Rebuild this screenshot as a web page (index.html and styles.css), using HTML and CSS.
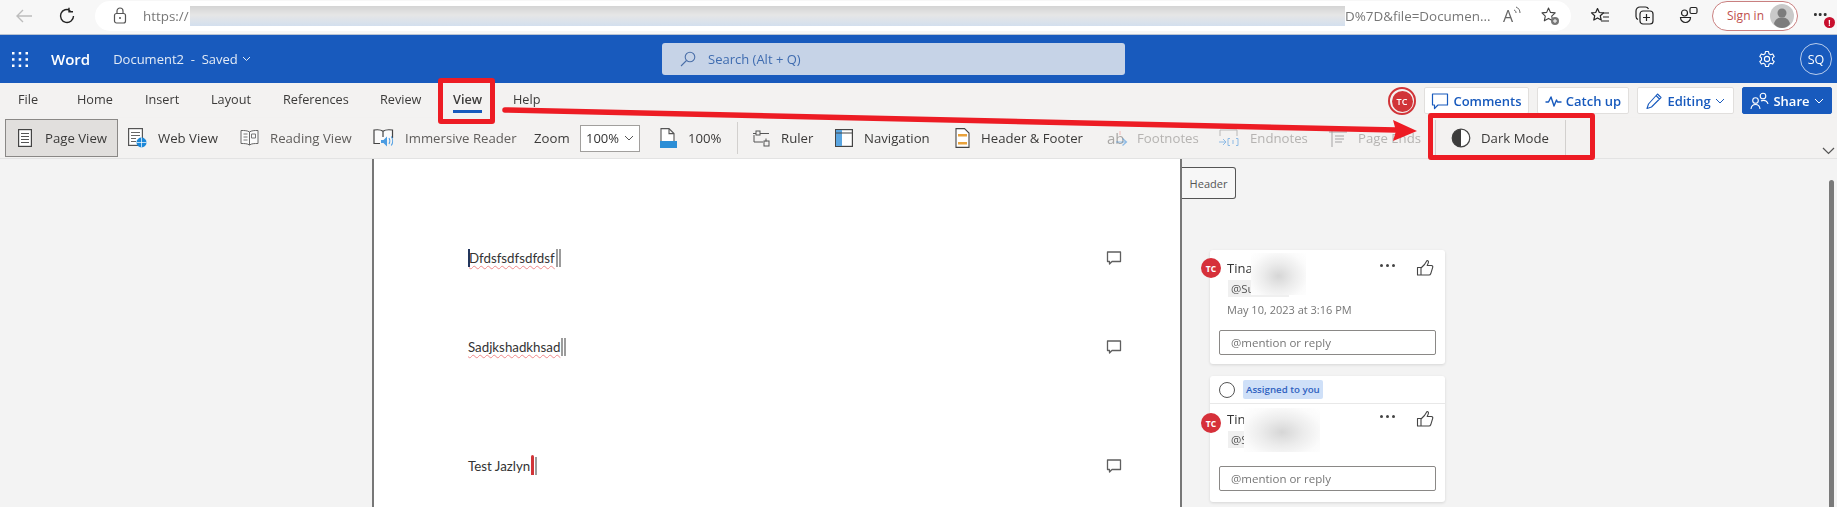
FILE: index.html
```html
<!DOCTYPE html>
<html lang="en">
<head>
<meta charset="utf-8">
<title>Document2 - Word</title>
<link rel="stylesheet" href="styles.css">
</head>
<body>
<svg class="defs" width="0" height="0" aria-hidden="true">
  <symbol id="like" viewBox="0 0 18 18"><path d="M1.500 8.500h3.500v7.500H1.500zM5 9l3.500-3.500L11 1.500c1.300.2 1.800 1.200 1.300 2.400L11.200 6.500h4.300c1 0 1.500 1 1.200 1.800l-2 6.500c-.3.800-.9 1.200-1.700 1.200H5" fill="none" stroke="#444" stroke-width="1.100" stroke-linejoin="round"/></symbol>
  <symbol id="bubble" viewBox="0 0 16 16"><path d="M1.500 2h13v9.500H6l-2.500 2.500v-2.500h-2z" fill="none" stroke="#5f5f5f" stroke-width="1.300" stroke-linejoin="round"/></symbol>
</svg>
<div class="app">
  <header class="browser">
    <svg class="b-back" width="18" height="16" viewBox="0 0 18 16"><path d="M17 8H2M8 2 2 8l6 6" fill="none" stroke="#bdbdbd" stroke-width="1.400"/></svg>
    <svg class="b-reload" width="18" height="18" viewBox="0 0 18 18"><path d="M15.500 9A6.500 6.500 0 1 1 12.500 3.500M11 .8v4h4" fill="none" stroke="#222" stroke-width="1.400"/></svg>
    <div class="pill">
      <svg class="lock" width="14" height="17" viewBox="0 0 14 17"><path d="M4 7V4a3 3 0 0 1 6 0v3" fill="none" stroke="#555" stroke-width="1.200"/><rect x="1.500" y="6.500" width="11" height="9.500" rx="2" fill="none" stroke="#555" stroke-width="1.200"/><circle cx="7" cy="11" r="1" fill="#555"/></svg>
      <span class="url-a">https://</span>
      <span class="redact"></span>
      <span class="url-b">D%7D&amp;file=Documen...</span>
      <div class="read"><span class="read-a">A</span><svg width="8" height="10" viewBox="0 0 8 10"><path d="M1 4c1.500.5 2 1.500 2 3M3 1c2.500 1 4 3 4 6" fill="none" stroke="#666" stroke-width="1"/></svg></div>
      <svg class="fav" width="20" height="20" viewBox="0 0 20 20"><path d="M8.500 2l2 4.400 4.700.5-3.500 3.200 1 4.700-4.200-2.400-4.200 2.400 1-4.700L2 6.900l4.700-.5z" fill="none" stroke="#444" stroke-width="1.100" stroke-linejoin="round"/><circle cx="15" cy="15" r="4" fill="#777"/><path d="M15 13v4M13 15h4" stroke="#fff" stroke-width="1"/></svg>
    </div>
    <svg class="t-favs" width="20" height="18" viewBox="0 0 20 18"><path d="M7.500 1.500l1.800 4 4.200.4-3.200 2.900.9 4.200-3.700-2.100-3.700 2.100.9-4.200L1.500 5.900l4.200-.4z" fill="none" stroke="#222" stroke-width="1.200" stroke-linejoin="round"/><path d="M13 6h6M13 10h6M11 14h8" stroke="#222" stroke-width="1.200"/></svg>
    <svg class="t-coll" width="19" height="19" viewBox="0 0 19 19"><rect x="5" y="5" width="13" height="13" rx="3" fill="none" stroke="#222" stroke-width="1.200"/><path d="M3 13.500C1.800 13 1 12 1 10.500V5a4 4 0 0 1 4-4h5.500c1.500 0 2.500.8 3 2M11.500 8v7M8 11.500h7" fill="none" stroke="#222" stroke-width="1.200"/></svg>
    <svg class="t-ext" width="20" height="19" viewBox="0 0 20 19"><circle cx="5.500" cy="7" r="3" fill="none" stroke="#222" stroke-width="1.200"/><rect x="11" y="1.500" width="7" height="6" rx="1.500" fill="none" stroke="#222" stroke-width="1.200"/><path d="M1.500 11.500h10a5 5 0 0 1-10 0z" fill="none" stroke="#222" stroke-width="1.200"/></svg>
    <div class="signin">
      <span class="signin-text">Sign in</span>
      <svg class="guest" width="24" height="24" viewBox="0 0 24 24"><circle cx="12" cy="12" r="12" fill="#c9c9c9"/><circle cx="12" cy="9" r="4.500" fill="#7d7d7d"/><path d="M4 20c1-5 4-6.500 8-6.500S19 15 20 20c-2 2.500-5 4-8 4s-6-1.500-8-4z" fill="#7d7d7d"/></svg>
    </div>
    <div class="more"><span class="more-dots">···</span><span class="more-badge">!</span></div>
  </header>

  <div class="appbar">
    <div class="brand">
      <svg class="waffle" width="16" height="15" viewBox="0 0 16 15"><g fill="#fff"><rect width="2.500" height="2.500"/><rect x="6.700" width="2.500" height="2.500"/><rect x="13.500" width="2.500" height="2.500"/><rect y="6.200" width="2.500" height="2.500"/><rect x="6.700" y="6.200" width="2.500" height="2.500"/><rect x="13.500" y="6.200" width="2.500" height="2.500"/><rect y="12.500" width="2.500" height="2.500"/><rect x="6.700" y="12.500" width="2.500" height="2.500"/><rect x="13.500" y="12.500" width="2.500" height="2.500"/></g></svg>
      <span class="word">Word</span>
      <span class="docname">Document2 &nbsp;-&nbsp; Saved</span>
      <svg width="9" height="6" viewBox="0 0 9 6"><path d="M1 1l3.500 3.500L8 1" fill="none" stroke="#e3ebf6" stroke-width="1"/></svg>
    </div>
    <div class="search">
      <svg width="16" height="16" viewBox="0 0 16 16"><circle cx="10" cy="6" r="4.800" fill="none" stroke="#4a6fa8" stroke-width="1.100"/><path d="M6.500 9.500 1 15" stroke="#4a6fa8" stroke-width="1.100"/></svg>
      <span>Search (Alt + Q)</span>
    </div>
    <div class="user">
      <svg width="18" height="18" viewBox="0 0 18 18"><circle cx="9" cy="9" r="2.600" fill="none" stroke="#fff" stroke-width="1.100"/><path d="M7.500 1.500h3l.4 2.200 1.700 1 2.100-.8 1.500 2.600-1.700 1.400v2.200l1.700 1.400-1.500 2.600-2.100-.8-1.700 1-.4 2.200h-3l-.4-2.200-1.700-1-2.100.8-1.500-2.600 1.700-1.400V7.900L1.800 6.500l1.500-2.600 2.100.8 1.700-1z" fill="none" stroke="#fff" stroke-width="1.100" stroke-linejoin="round"/></svg>
      <span class="sq">SQ</span>
    </div>
  </div>

  <div class="tabs-row">
    <nav class="tabs">
      <span class="tab">File</span>
      <span class="tab">Home</span>
      <span class="tab">Insert</span>
      <span class="tab">Layout</span>
      <span class="tab">References</span>
      <span class="tab">Review</span>
      <span class="tab tab-on">View</span>
      <span class="tab">Help</span>
    </nav>
    <div class="actions">
      <span class="presence"><span class="presence-in">TC</span></span>
      <button class="act act-comments"><svg width="18" height="18" viewBox="0 0 18 18"><path d="M1.500 2h15v11H7l-3.500 3.500V13h-2z" fill="none" stroke="#185abd" stroke-width="1.200" stroke-linejoin="round"/></svg>Comments</button>
      <button class="act act-catch"><svg width="17" height="12" viewBox="0 0 17 12"><path d="M.5 7h3l2.500-5 3 9 2.500-6 1 2h4" fill="none" stroke="#185abd" stroke-width="1.400" stroke-linejoin="round"/></svg>Catch up</button>
      <button class="act act-edit"><svg width="17" height="18" viewBox="0 0 17 18"><path d="M11.500 2 15 5.500 5.500 15 1 16.500 2.500 12zM10 3.500l3.500 3.500" fill="none" stroke="#185abd" stroke-width="1.100" stroke-linejoin="round"/></svg>Editing<svg width="10" height="6" viewBox="0 0 10 6"><path d="M1 1l4 4 4-4" fill="none" stroke="#185abd" stroke-width="1"/></svg></button>
      <button class="act act-share"><svg width="19" height="18" viewBox="0 0 19 18"><circle cx="5.500" cy="8.500" r="2.800" fill="none" stroke="#fff" stroke-width="1.100"/><circle cx="13" cy="4" r="2.800" fill="none" stroke="#fff" stroke-width="1.100"/><path d="M1 17c.3-3 2-4.500 4.500-4.500S9.700 14 10 17M11 9c1-.8 3.800-.8 5 0 1 .7 1.800 2 2 3" fill="none" stroke="#fff" stroke-width="1.100"/></svg>Share<svg width="10" height="6" viewBox="0 0 10 6"><path d="M1 1l4 4 4-4" fill="none" stroke="#fff" stroke-width="1"/></svg></button>
    </div>
  </div>

  <div class="ribbon">
    <div class="rb rb-page">
      <svg width="14" height="18" viewBox="0 0 14 18"><rect x=".6" y=".6" width="12.800" height="16.800" fill="#fff" stroke="#444" stroke-width="1.200"/><path d="M3 4.500h8M3 7.500h8M3 10.500h8M3 13.500h8" stroke="#555"/></svg>
      <span>Page View</span>
    </div>
    <div class="rb">
      <svg width="19" height="20" viewBox="0 0 19 20"><rect x=".6" y=".6" width="13.800" height="16.800" fill="#fff" stroke="#555" stroke-width="1.200"/><path d="M3 4.500h9M3 7.500h9M3 10.500h5M3 13.500h5" stroke="#666"/><circle cx="13.500" cy="14.500" r="5" fill="#1b87d8"/><path d="M8.500 14.500h10M13.500 9.500v10" stroke="#fff" stroke-width=".7"/></svg>
      <span>Web View</span>
    </div>
    <div class="rb rb-soft">
      <svg width="19" height="18" viewBox="0 0 19 18"><path d="M9.500 3c-2-1.500-5-1.500-8.500-1.500v13c3.500 0 6.500 0 8.500 1.500 2-1.500 5-1.500 8.500-1.500v-13c-3.500 0-6.500 0-8.500 1.500zm0 0v13" fill="#fbfbfb" stroke="#666"/><path d="M3.500 5h4M3.500 8h4M3.500 11h4M11.500 5h4v4h-4z" fill="none" stroke="#777"/></svg>
      <span>Reading View</span>
    </div>
    <div class="rb rb-soft">
      <svg width="21" height="20" viewBox="0 0 21 20"><path d="M7 15.500H1V2c3.500-.5 7-.3 9 1.200C12 1.700 15.500 1.500 19.500 2v8M10 3.200V9" fill="#fbfbfb" stroke="#444" stroke-width="1.200"/><path d="M8 12h2.500l3.500-3.500v10L10.500 15H8z" fill="#4b9ce2"/><path d="M16 10c1 1.500 1 4.500 0 6M18.300 8.500c1.700 2.500 1.700 6.500 0 9" fill="none" stroke="#4b9ce2" stroke-width="1.100"/></svg>
      <span>Immersive Reader</span>
    </div>
    <span class="zoom-label">Zoom</span>
    <div class="zoom-select"><span>100%</span><svg width="10" height="6" viewBox="0 0 10 6"><path d="M1 1l4 4 4-4" fill="none" stroke="#555" stroke-width="1"/></svg></div>
    <div class="rb">
      <svg width="17" height="20" viewBox="0 0 17 20"><path d="M1 13V.6h8l5 5V13M9 .6v5h5" fill="#fff" stroke="#555" stroke-width="1.100"/><rect x="0" y="13" width="17" height="7" fill="#2c8ed6"/></svg>
      <span>100%</span>
    </div>
    <span class="rb-sep"></span>
    <div class="rb">
      <svg width="18" height="18" viewBox="0 0 18 18"><path d="M1 4.500h3M8 4.500h9M11 13h-9V6M14 12.500v-3" fill="none" stroke="#555"/><rect x="4" y="2" width="4" height="4" fill="none" stroke="#555"/><rect x="12" y="12" width="5" height="5" fill="none" stroke="#555"/></svg>
      <span>Ruler</span>
    </div>
    <div class="rb">
      <svg width="18" height="18" viewBox="0 0 18 18"><rect x=".6" y=".6" width="16.800" height="16.800" fill="#fff" stroke="#444" stroke-width="1.200"/><rect x="1" y="1" width="6" height="16" fill="#5aa5e0"/><path d="M1 4h16" stroke="#444"/></svg>
      <span>Navigation</span>
    </div>
    <div class="rb">
      <svg width="15" height="20" viewBox="0 0 15 20"><path d="M1 .6h8.500L14 5v14.400H1z" fill="#fff" stroke="#444" stroke-width="1.100"/><rect x="3" y="6" width="9" height="2.500" fill="#e9a23b"/><rect x="3" y="14" width="9" height="2.500" fill="#e9a23b"/></svg>
      <span>Header &amp; Footer</span>
    </div>
    <div class="rb rb-off">
      <span class="ab">ab<svg class="ab-mark" width="12" height="16" viewBox="0 0 12 16"><path d="M4 0v4" stroke="#e88" /><path d="M0 11h10M6.500 7.500l4 3.500-4 3.500" fill="none" stroke="#3d8fdc" stroke-width="1.200"/></svg></span><span>Footnotes</span>
    </div>
    <div class="rb rb-off">
      <svg width="20" height="19" viewBox="0 0 20 19"><path d="M1 7V1h17v6" fill="none" stroke="#888"/><path d="M0 13h7M4 10l3 3-3 3" fill="none" stroke="#3d8fdc"/><path d="M11 9.500H9v7h2M17 9.500h2v7h-2M14 11v4" fill="none" stroke="#3d8fdc"/></svg>
      <span>Endnotes</span>
    </div>
    <div class="rb rb-off">
      <svg width="18" height="18" viewBox="0 0 18 18"><path d="M0 3h18M3 0v18M6 7h9M6 10h9M6 13h7" fill="none" stroke="#666"/></svg>
      <span>Page Ends</span>
    </div>
    <span class="rb-sep rb-sep-dark"></span>
    <div class="rb rb-dark">
      <svg width="20" height="20" viewBox="0 0 20 20"><circle cx="10" cy="10" r="8.800" fill="#fff" stroke="#444" stroke-width="1.200"/><path d="M10 1.200a8.800 8.800 0 0 0 0 17.600z" fill="#3c3c3c"/></svg>
      <span>Dark Mode</span>
    </div>
    <span class="rb-sep rb-sep-dark"></span>
    <svg class="rb-more" width="13" height="8" viewBox="0 0 13 8"><path d="M1 1l5.500 5.500L12 1" fill="none" stroke="#555" stroke-width="1.200"/></svg>
  </div>

  <main class="workspace">
    <div class="gutter"></div>
    <section class="page">
      <div class="line line-1">
        <span class="doc-text"><i class="caret caret-blue"></i><u class="squiggle">Dfdsfsdfsdfdsf</u><i class="caret"></i><i class="caret"></i></span>
        <svg class="note" width="16" height="16"><use href="#bubble"/></svg>
      </div>
      <div class="line line-2">
        <span class="doc-text"><u class="squiggle">Sadjkshadkhsad</u><i class="caret"></i><i class="caret"></i></span>
        <svg class="note" width="16" height="16"><use href="#bubble"/></svg>
      </div>
      <div class="line line-3">
        <span class="doc-text">Test Jazlyn<i class="caret caret-red"></i><i class="caret"></i></span>
        <svg class="note" width="16" height="16"><use href="#bubble"/></svg>
      </div>
    </section>
    <aside class="pane">
      <div class="header-tag">Header</div>
      <article class="card card-1">
        <span class="avatar">TC</span>
        <div class="card-head"><span class="name">Tina</span><span class="dots"><i></i><i></i><i></i></span><svg width="18" height="18"><use href="#like"/></svg></div>
        <span class="mention">@Su</span>
        <p class="date">May 10, 2023 at 3:16 PM</p>
        <div class="reply">@mention or reply</div>
        <span class="smudge smudge-1"></span>
      </article>
      <article class="card card-2">
        <div class="assign"><span class="radio"></span><span class="assigned">Assigned to you</span></div>
        <div class="card-body">
          <span class="avatar">TC</span>
          <div class="card-head"><span class="name">Tin</span><span class="dots"><i></i><i></i><i></i></span><svg width="18" height="18"><use href="#like"/></svg></div>
          <span class="mention">@S</span>
          <div class="reply">@mention or reply</div>
          <span class="smudge smudge-2"></span>
        </div>
      </article>
      <span class="scrollbar"></span>
    </aside>
  </main>

  <span class="callout callout-view"></span>
  <span class="callout callout-dark"></span>
  <svg class="arrow" width="1837" height="507" viewBox="0 0 1837 507"><path d="M505 110 1396 130" stroke="#ed1c24" stroke-width="5.500" stroke-linecap="round"/><path d="M1393 120l24 11-24 10 3-10z" fill="#ed1c24"/></svg>
</div>
</body>
</html>
```
FILE: styles.css
```css
* { box-sizing: border-box; }
html, body { margin: 0; padding: 0; }
body { width: 1837px; height: 507px; overflow: hidden; font-family: "Open Sans", "Liberation Sans", sans-serif; font-size: 13px; color: #333; background: #f3f3f3; }
.defs { position: absolute; }
svg { display: block; flex: none; }
.app { position: relative; width: 1837px; height: 507px; overflow: hidden; filter: blur(.6px); }

/* browser chrome */
.browser { display: flex; align-items: center; height: 35px; background: #f7f7f7; border-bottom: 1px solid #b9c3d2; padding-bottom: 3px; }
.b-back { margin-left: 15px; }
.b-reload { margin-left: 25px; }
.pill { display: flex; align-items: center; width: 1476px; height: 30px; margin-left: 19px; padding-left: 18px; background: #fff; border-radius: 15px; }
.url-a { flex: none; width: 47px; margin-left: 16px; font-size: 13.4px; color: #777; white-space: nowrap; }
.redact { flex: none; width: 1155px; height: 20px; background: linear-gradient(#d4d4d4, #e6e6e6 45%, #d3dfee); }
.url-b { flex: none; width: 158px; font-size: 13.4px; color: #777; white-space: nowrap; }
.read { display: flex; align-items: flex-start; width: 20px; }
.read-a { font-size: 16px; line-height: 20px; color: #666; }
.fav { margin-left: 17px; }
.t-favs { margin-left: 19px; }
.t-coll { margin-left: 25px; }
.t-ext { margin-left: 25px; }
.signin { display: flex; align-items: center; justify-content: space-between; width: 86px; height: 30px; margin-left: 13px; padding: 0 3px 0 14px; border: 1px solid #c98080; border-radius: 15px; background: #fff; }
.signin-text { font-size: 12px; color: #c0504d; }
.more { position: relative; margin-left: 15px; }
.more-dots { font-size: 17px; font-weight: 700; line-height: 18px; color: #333; }
.more-badge { position: absolute; left: 11px; top: 11px; display: flex; align-items: center; justify-content: center; width: 11px; height: 11px; border-radius: 50%; background: #c8102e; color: #fff; font-size: 8px; font-weight: 700; line-height: 11px; }

/* word title bar */
.appbar { display: grid; grid-template-columns: 662px 463px 1fr; align-items: center; height: 48px; background: #185abd; }
.brand { display: flex; align-items: center; padding-left: 12px; }
.word { margin-left: 23px; font-size: 15px; font-weight: 600; color: #fff; }
.docname { margin-left: 23px; font-size: 13px; color: #e3ebf6; white-space: nowrap; }
.brand > svg:last-child { margin-left: 4px; }
.search { display: flex; align-items: center; gap: 12px; height: 32px; padding-left: 18px; background: #c6d3e7; border-radius: 3px; color: #3f6cb0; font-size: 13px; }
.user { display: flex; align-items: center; justify-content: flex-end; padding-right: 5px; gap: 24px; }
.sq { display: flex; align-items: center; justify-content: center; width: 32px; height: 32px; border: 1px solid #b9cdec; border-radius: 50%; color: #fff; font-size: 12.500px; }

/* tabs */
.tabs-row { display: flex; justify-content: space-between; height: 35px; background: #f3f2f1; }
.tabs { display: grid; grid-template-columns: 59px 68px 66px 72px 97px 73px 60px 40px; align-items: start; padding: 7px 0 0 18px; }
.tab { justify-self: start; line-height: 18px; font-size: 12.700px; color: #3b3a39; padding-bottom: 2px; border-bottom: 2px solid transparent; }
.tab-on { font-weight: 600; border-bottom: 3px solid #185abd; }
.actions { display: flex; align-items: flex-start; gap: 8px; padding: 4px 5px 0 0; }
.presence { display: flex; align-items: center; justify-content: center; width: 28px; height: 28px; border-radius: 50%; border: 2px solid #d13438; background: #f3f2f1; }
.presence-in { display: flex; align-items: center; justify-content: center; width: 21px; height: 21px; border-radius: 50%; background: #d13438; color: #fff; font-size: 9px; font-weight: 600; }
.act { display: flex; align-items: center; height: 27px; padding: 0; gap: 4px; justify-content: center; border: 1px solid #e1dfdd; border-radius: 2px; background: #fff; color: #185abd; font: 600 13px "Open Sans", sans-serif; white-space: nowrap; }
.act-comments { width: 105px; }
.act-catch { width: 92px; }
.act-edit { width: 97px; }
.act-share { width: 90px; background: #185abd; border-color: #185abd; color: #fff; }

/* ribbon */
.ribbon { display: grid; grid-template-columns: 123px 112px 133px 161px 46px 80px 77px 15px 83px 120px 152px 112px 110px 106px 16px 114px 16px 1fr; align-items: center; height: 41px; padding-left: 5px; background: #f3f2f1; border-bottom: 1px solid #e3e3e3; box-shadow: 0 1px 2px rgba(0,0,0,.08); }
.rb { display: flex; align-items: center; gap: 11px; font-size: 13.200px; color: #3b3a39; white-space: nowrap; }
.rb-soft { color: #605e5c; }
.rb-off { color: #b5b3b1; }
.rb-off svg { opacity: .55; }
.rb-page { width: 113px; height: 38px; padding-left: 12px; gap: 13px; background: #e1dfdd; border: 1px solid #8a8886; }
.zoom-label { font-size: 13.200px; color: #3b3a39; }
.zoom-select { display: flex; align-items: center; justify-content: space-between; width: 60px; height: 27px; padding: 0 5px; background: #fff; border: 1px solid #a19f9d; font-size: 13px; }
.rb-sep { width: 1px; height: 32px; background: #d2d0ce; }
.rb-sep-dark { height: 36px; }
.rb-dark { gap: 10px; }
.ab { position: relative; width: 19px; font-size: 15px; color: #a9a7a5; }
.ab-mark { position: absolute; left: 9px; top: 3px; }
.rb-more { justify-self: end; align-self: end; margin: 0 2px 3px 0; }

/* document */
.workspace { display: grid; grid-template-columns: 372px 810px 1fr; height: 348px; background: #f3f3f3; }
.page { padding: 89px 58px 0 94px; background: #fff; border: solid #777; border-width: 0 2px; }
.line { display: flex; align-items: center; justify-content: space-between; height: 20px; }
.line-2 { margin-top: 69px; }
.line-3 { margin-top: 99px; }
.doc-text { display: flex; align-items: center; font-family: Lato, "Open Sans", sans-serif; font-size: 13.300px; line-height: 20px; color: #333; }
.squiggle { text-decoration: underline wavy #f08a8a 1px; text-underline-offset: 2px; }
.caret { display: block; width: 2px; height: 18px; margin-left: 1px; background: #9c9c9c; font-style: normal; }
.caret-blue { margin: 0 -1px 0 0; background: #23365e; }
.caret-red { height: 20px; width: 3px; margin-top: -2px; background: #d13438; border-radius: 2px 2px 0 0; }

/* comments pane */
.pane { position: relative; padding-top: 8px; }
.header-tag { display: flex; align-items: center; justify-content: center; width: 54px; height: 32px; background: #f7f7f7; border: 1px solid #555; border-left: 0; border-radius: 0 3px 3px 0; font-size: 11px; color: #555; }
.card { position: relative; width: 235px; margin-left: 28px; background: #fff; border-radius: 3px; box-shadow: 0 1px 3px rgba(0,0,0,.12); }
.card-1 { height: 114px; margin-top: 51px; padding: 8px 9px 0; }
.card-2 { height: 126px; margin-top: 12px; }
.card-body { position: relative; height: 98px; padding: 5px 9px 0; }
.assign { display: flex; align-items: center; gap: 8px; height: 28px; padding-left: 9px; border-bottom: 1px solid #e8e8e8; }
.radio { width: 16px; height: 16px; border: 1.300px solid #555; border-radius: 50%; }
.assigned { display: flex; align-items: center; height: 19px; padding: 0 3px; background: #cfe0f8; border-radius: 2px; color: #2f62c0; font-size: 9.700px; font-weight: 600; }
.avatar { position: absolute; left: -9px; top: 8px; display: flex; align-items: center; justify-content: center; width: 20px; height: 20px; border-radius: 50%; background: #d6303a; color: #fff; font-size: 8.500px; font-weight: 700; }
.card-body .avatar { top: 9px; }
.card-head { display: flex; align-items: center; height: 20px; padding: 0 2px 0 8px; }
.name { flex: 1; font-size: 13px; color: #333; }
.dots { display: flex; gap: 3px; width: 36px; margin-top: -6px; }
.dots i { width: 3px; height: 3px; border-radius: 50%; background: #444; }
.mention { display: block; width: 61px; height: 17px; margin: 2px 0 0 9px; padding-left: 3px; background: #f0f0f0; font-size: 11.500px; line-height: 17px; color: #555; }
.date { margin: 4px 0 0 8px; font-size: 11px; line-height: 18px; color: #767676; }
.reply { display: flex; align-items: center; height: 25px; padding-left: 11px; background: #fff; border: 1px solid #8a8886; border-radius: 2px; font-size: 11.500px; color: #767676; }
.card-1 .reply { margin-top: 11px; }
.card-2 .reply { margin-top: 18px; }
.smudge { position: absolute; background: radial-gradient(ellipse at 50% 55%, #d6d6d6 0, #ececec 40%, #fbfbfb 75%, #fff 100%); }
.smudge-1 { left: 41px; top: 3px; width: 55px; height: 42px; }
.smudge-2 { left: 34px; top: 4px; width: 76px; height: 44px; }
.scrollbar { position: absolute; right: 3px; top: 21px; width: 5px; height: 340px; border-radius: 3px; background: #7a7a7a; }

/* annotation overlays */
.callout { position: absolute; border: 5px solid #ed1c24; border-radius: 3px; }
.callout-view { left: 438px; top: 78px; width: 57px; height: 46px; }
.callout-dark { left: 1428px; top: 113px; width: 167px; height: 47px; }
.arrow { position: absolute; left: 0; top: 0; pointer-events: none; }
```
